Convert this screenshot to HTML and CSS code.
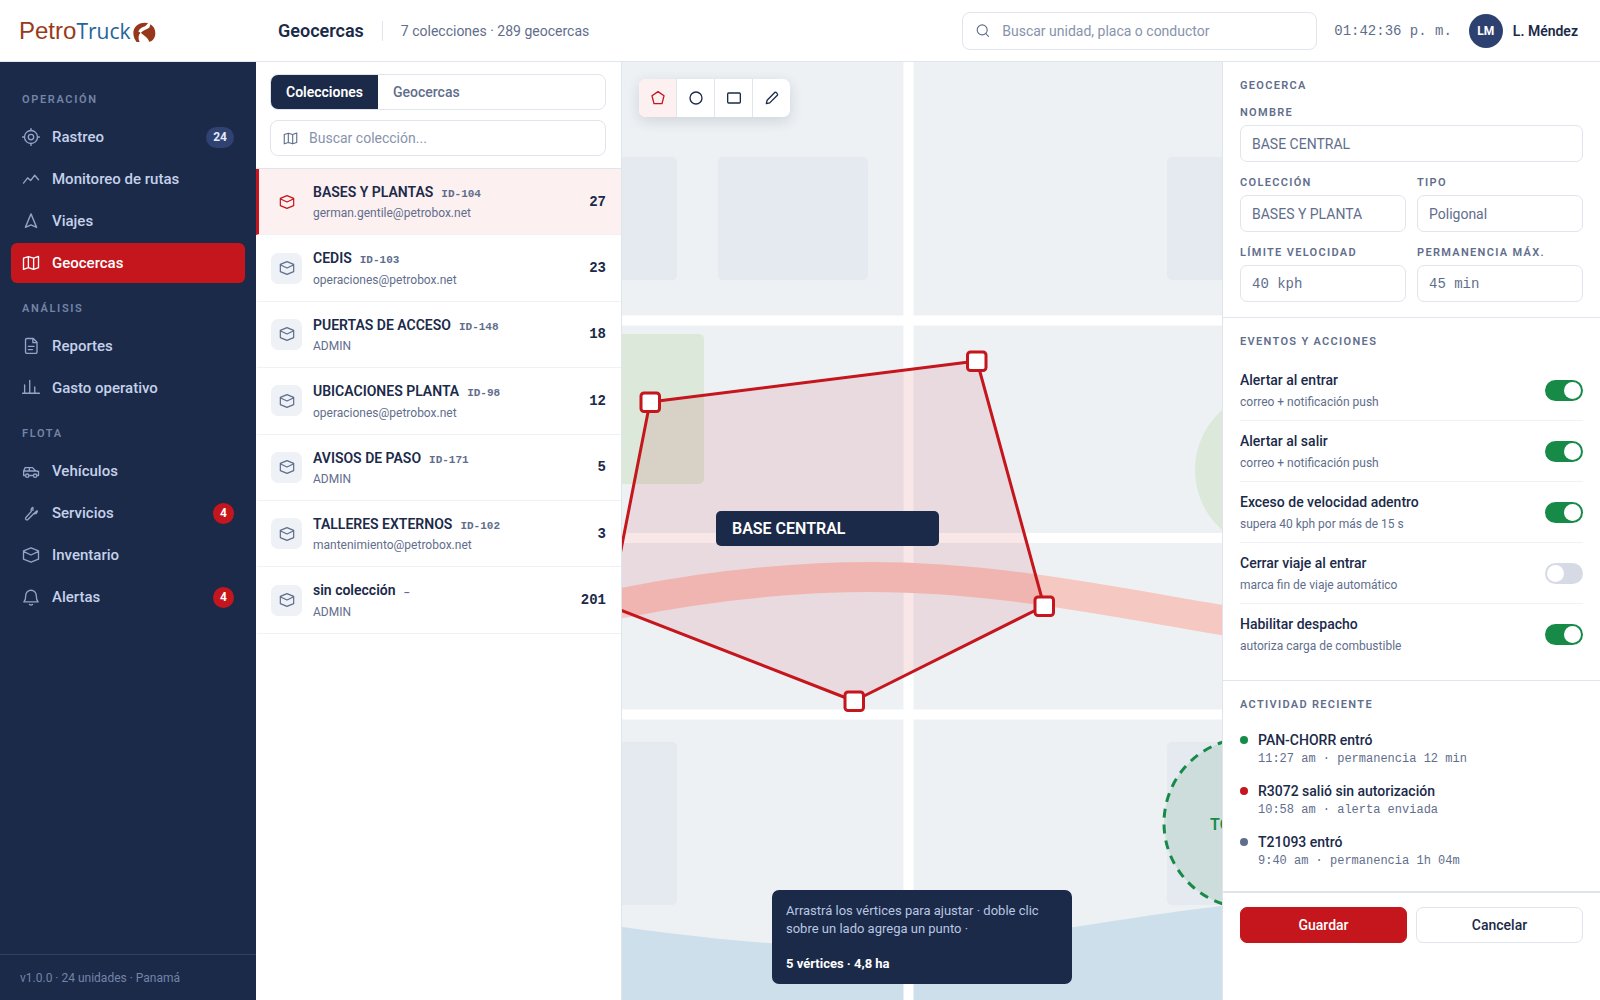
FILE: index.html
```html
<!DOCTYPE html>
<html lang="es">
<head>
<meta charset="utf-8">
<meta name="viewport" content="width=device-width, initial-scale=1">
<title>PetroTruck · Geocercas</title>
<link rel="stylesheet" href="styles.css">
</head>
<body>
<svg class="sprite" aria-hidden="true">
  <symbol id="i-target" viewBox="0 0 24 24"><circle cx="12" cy="12" r="8.7"/><circle cx="12" cy="12" r="3.6"/><path d="M12 .8v2.5M12 20.7v2.5M.8 12h2.5M20.7 12h2.5"/></symbol>
  <symbol id="i-route" viewBox="0 0 24 24"><path d="M2 17.5l5.5-7 4 3.5 5.5-7 5 6"/></symbol>
  <symbol id="i-nav" viewBox="0 0 24 24"><path d="M12 2.5L4.5 20.5l7.5-3.200 7.500 3.200z"/></symbol>
  <symbol id="i-map" viewBox="0 0 24 24"><path d="M8.500 3.500L2 5.500v15l6.500-2.200 7 2.200 6.500-2.200v-15l-6.500 2.200zM8.500 3.500v14.800M15.500 5.500v15"/></symbol>
  <symbol id="i-doc" viewBox="0 0 24 24"><path d="M6.500 2h8.500l5 5v13a1.800 1.800 0 0 1-1.800 1.800H6.500A1.800 1.800 0 0 1 4.700 20V3.800A1.800 1.800 0 0 1 6.500 2zM14.500 2v5.500H20M8.500 12.500h7.500M8.500 16.800h5.500"/></symbol>
  <symbol id="i-bars" viewBox="0 0 24 24"><path d="M.8 19h22.400M3.500 19V8M10.300 19V2M17 19v-8.500"/></symbol>
  <symbol id="i-car" viewBox="0 0 24 24"><path d="M4.500 18H2.200v-6l2-4.500h9.800l4 4.200 4 1V18h-2M9.500 18h5.500M2.200 12h16M9.800 7.500V12"/><circle cx="7" cy="18.200" r="2.200"/><circle cx="17.500" cy="18.200" r="2.200"/></symbol>
  <symbol id="i-wrench" viewBox="0 0 24 24"><path d="M14.500 4.500c-2 1-2.800 3-2 5.300L5.200 18a1.800 1.800 0 0 0 2.700 2.600l7.600-7.600c2.500.4 4.300-.6 5-3M14.500 4.500v4M15.500 13l4.500-4"/></symbol>
  <symbol id="i-box" viewBox="0 0 24 24"><path d="M12 2.500l10 4v11L12 21.500 2 17.500v-11zM2.500 7.500L12 12 21.500 7.500"/></symbol>
  <symbol id="i-bell" viewBox="0 0 24 24"><path d="M2.500 18.500c2.500-2.500 2.500-4.500 2.500-8.500a7 7 0 0 1 14 0c0 4 0 6 2.500 8.500zM10 22a3.500 3.500 0 0 0 4 0"/></symbol>
  <symbol id="i-search" viewBox="0 0 24 24"><circle cx="11.500" cy="11" r="8"/><path d="M17.300 16.800l4.200 4.700"/></symbol>
  <symbol id="i-poly" viewBox="0 0 24 24"><path d="M12 2.500l9 6.200L18 20.500H6L3 8.700z"/></symbol>
  <symbol id="i-circle" viewBox="0 0 24 24"><circle cx="12" cy="12" r="9"/></symbol>
  <symbol id="i-rect" viewBox="0 0 24 24"><rect x="2.500" y="4.500" width="19" height="15" rx="1.500"/></symbol>
  <symbol id="i-pencil" viewBox="0 0 24 24"><path d="M3.500 20.500l1.200-5.200L16.500 3.500c1-1 4.800 2.800 3.900 3.900L8.600 19.300z"/></symbol>
</svg>

<header class="topbar">
  <a class="brand" href="#" aria-label="PetroTruck">
    <span class="brand-name"><span class="brand-petro">Petro</span><span class="brand-truck">Truck</span></span>
    <svg class="brand-mark" viewBox="398 66 70 64" aria-hidden="true"><path d="M436 68C414 67 399 82 399 99c0 12 4 21 10 28h9c-5-12-4-21 3-28l-7-4c4-9 12-14 21-16l9-9z"/><path d="M451 73c10 6 15 16 15 28 0 10-5 19-13 24l-6 1c-3-12-14-17-25-27 8-8 19-11 26-16z"/></svg>
  </a>
  <div class="topbar-main">
    <h1 class="title">Geocercas</h1>
    <span class="subtitle">7 colecciones · 289 geocercas</span>
    <label class="search search-global"><svg class="icon"><use href="#i-search"/></svg><input type="search" placeholder="Buscar unidad, placa o conductor" aria-label="Buscar unidad, placa o conductor"></label>
    <time class="clock">01:42:36 p. m.</time>
    <div class="user"><span class="avatar">LM</span><span class="user-name">L. Méndez</span></div>
  </div>
</header>

<div class="app">
  <aside class="sidebar">
    <nav class="nav">
      <h2 class="nav-label">OPERACIÓN</h2>
      <a class="nav-item" href="#"><svg class="icon"><use href="#i-target"/></svg>Rastreo<span class="badge">24</span></a>
      <a class="nav-item" href="#"><svg class="icon"><use href="#i-route"/></svg>Monitoreo de rutas</a>
      <a class="nav-item" href="#"><svg class="icon"><use href="#i-nav"/></svg>Viajes</a>
      <a class="nav-item active" href="#" aria-current="page"><svg class="icon"><use href="#i-map"/></svg>Geocercas</a>
      <h2 class="nav-label">ANÁLISIS</h2>
      <a class="nav-item" href="#"><svg class="icon"><use href="#i-doc"/></svg>Reportes</a>
      <a class="nav-item" href="#"><svg class="icon"><use href="#i-bars"/></svg>Gasto operativo</a>
      <h2 class="nav-label">FLOTA</h2>
      <a class="nav-item" href="#"><svg class="icon"><use href="#i-car"/></svg>Vehículos</a>
      <a class="nav-item" href="#"><svg class="icon"><use href="#i-wrench"/></svg>Servicios<span class="badge alert">4</span></a>
      <a class="nav-item" href="#"><svg class="icon"><use href="#i-box"/></svg>Inventario</a>
      <a class="nav-item" href="#"><svg class="icon"><use href="#i-bell"/></svg>Alertas<span class="badge alert">4</span></a>
    </nav>
    <footer class="sidebar-foot">v1.0.0 · 24 unidades · Panamá</footer>
  </aside>

  <section class="collections">
    <div class="collections-head">
      <div class="tabs">
        <button class="tab active" type="button">Colecciones</button>
        <button class="tab" type="button">Geocercas</button>
      </div>
      <label class="search"><svg class="icon"><use href="#i-map"/></svg><input type="search" placeholder="Buscar colección..." aria-label="Buscar colección"></label>
    </div>
    <ul class="list">
      <li class="row selected"><span class="row-icon"><svg class="icon"><use href="#i-box"/></svg></span><div class="row-text"><div class="row-name">BASES Y PLANTAS<span class="row-id">ID-104</span></div><div class="row-sub">german.gentile@petrobox.net</div></div><span class="row-count">27</span></li>
      <li class="row"><span class="row-icon"><svg class="icon"><use href="#i-box"/></svg></span><div class="row-text"><div class="row-name">CEDIS<span class="row-id">ID-103</span></div><div class="row-sub">operaciones@petrobox.net</div></div><span class="row-count">23</span></li>
      <li class="row"><span class="row-icon"><svg class="icon"><use href="#i-box"/></svg></span><div class="row-text"><div class="row-name">PUERTAS DE ACCESO<span class="row-id">ID-148</span></div><div class="row-sub">ADMIN</div></div><span class="row-count">18</span></li>
      <li class="row"><span class="row-icon"><svg class="icon"><use href="#i-box"/></svg></span><div class="row-text"><div class="row-name">UBICACIONES PLANTA<span class="row-id">ID-98</span></div><div class="row-sub">operaciones@petrobox.net</div></div><span class="row-count">12</span></li>
      <li class="row"><span class="row-icon"><svg class="icon"><use href="#i-box"/></svg></span><div class="row-text"><div class="row-name">AVISOS DE PASO<span class="row-id">ID-171</span></div><div class="row-sub">ADMIN</div></div><span class="row-count">5</span></li>
      <li class="row"><span class="row-icon"><svg class="icon"><use href="#i-box"/></svg></span><div class="row-text"><div class="row-name">TALLERES EXTERNOS<span class="row-id">ID-102</span></div><div class="row-sub">mantenimiento@petrobox.net</div></div><span class="row-count">3</span></li>
      <li class="row"><span class="row-icon"><svg class="icon"><use href="#i-box"/></svg></span><div class="row-text"><div class="row-name">sin colección<span class="row-id">–</span></div><div class="row-sub">ADMIN</div></div><span class="row-count">201</span></li>
    </ul>
  </section>

  <main class="map">
    <svg class="map-canvas" viewBox="0 0 600 938" preserveAspectRatio="xMidYMid slice" role="img" aria-label="Mapa de geocercas">
      <g class="m-block">
        <rect x="-94" y="95" width="149" height="123" rx="5"/>
        <rect x="96" y="95" width="150" height="123" rx="5"/>
        <rect x="545" y="95" width="150" height="123" rx="5"/>
        <rect x="-94" y="680" width="149" height="163" rx="5"/>
        <rect x="545" y="680" width="150" height="163" rx="5"/>
      </g>
      <g class="m-park">
        <rect x="-60" y="272" width="142" height="150" rx="5"/>
        <circle cx="653" cy="408" r="80"/>
      </g>
      <path class="m-water" d="M0 865C110 880 180 885 250 884C390 881 470 859 600 844V938H0z"/>
      <path class="m-road" d="M0 258.500H600M0 476H600M0 652.500H600M286.500 0V938"/>
      <path class="m-river" d="M-40 549L0 541C90 523 170 515 250 515C370 515 480 538 600 558L640 565"/>
      <circle class="m-circle" cx="627" cy="761" r="85"/>
      <text class="m-circle-name" x="626" y="768" text-anchor="middle">TOCUMEN</text>
      <path class="m-poly" d="M28 340L355 299L422 544L232 639L-12 544z"/>
      <g class="m-vertex">
        <rect x="19" y="331" width="18.500" height="18.500" rx="3"/>
        <rect x="345.500" y="290" width="18.500" height="18.500" rx="3"/>
        <rect x="413" y="535" width="18.500" height="18.500" rx="3"/>
        <rect x="223" y="630" width="18.500" height="18.500" rx="3"/>
      </g>
      <rect class="m-tag" x="94" y="449" width="223" height="35" rx="5"/>
      <text class="m-tag-name" x="110" y="472">BASE CENTRAL</text>
    </svg>
    <div class="tools" role="toolbar" aria-label="Herramientas de dibujo">
      <button class="tool active" type="button" aria-label="Polígono"><svg class="icon"><use href="#i-poly"/></svg></button>
      <button class="tool" type="button" aria-label="Círculo"><svg class="icon"><use href="#i-circle"/></svg></button>
      <button class="tool" type="button" aria-label="Rectángulo"><svg class="icon"><use href="#i-rect"/></svg></button>
      <button class="tool" type="button" aria-label="Editar"><svg class="icon"><use href="#i-pencil"/></svg></button>
    </div>
    <div class="hint">
      <p>Arrastrá los vértices para ajustar · doble clic sobre un lado agrega un punto ·</p>
      <strong>5 vértices · 4,8 ha</strong>
    </div>
  </main>

  <aside class="detail">
    <section class="block">
      <h2 class="label">GEOCERCA</h2>
      <div class="fields">
        <div class="field wide"><label class="label" for="f-name">NOMBRE</label><input id="f-name" value="BASE CENTRAL"></div>
        <div class="field"><label class="label" for="f-col">COLECCIÓN</label><input id="f-col" value="BASES Y PLANTA"></div>
        <div class="field"><label class="label" for="f-type">TIPO</label><input id="f-type" value="Poligonal"></div>
        <div class="field"><label class="label" for="f-speed">LÍMITE VELOCIDAD</label><input class="mono" id="f-speed" value="40 kph"></div>
        <div class="field"><label class="label" for="f-stay">PERMANENCIA MÁX.</label><input class="mono" id="f-stay" value="45 min"></div>
      </div>
    </section>
    <section class="block">
      <h2 class="label">EVENTOS Y ACCIONES</h2>
      <div class="events">
        <label class="event"><span class="event-text"><span class="event-name">Alertar al entrar</span><span class="event-sub">correo + notificación push</span></span><input class="switch" type="checkbox" checked></label>
        <label class="event"><span class="event-text"><span class="event-name">Alertar al salir</span><span class="event-sub">correo + notificación push</span></span><input class="switch" type="checkbox" checked></label>
        <label class="event"><span class="event-text"><span class="event-name">Exceso de velocidad adentro</span><span class="event-sub">supera 40 kph por más de 15 s</span></span><input class="switch" type="checkbox" checked></label>
        <label class="event"><span class="event-text"><span class="event-name">Cerrar viaje al entrar</span><span class="event-sub">marca fin de viaje automático</span></span><input class="switch" type="checkbox"></label>
        <label class="event"><span class="event-text"><span class="event-name">Habilitar despacho</span><span class="event-sub">autoriza carga de combustible</span></span><input class="switch" type="checkbox" checked></label>
      </div>
    </section>
    <section class="block">
      <h2 class="label">ACTIVIDAD RECIENTE</h2>
      <ul class="activity">
        <li class="act ok"><div class="act-name">PAN-CHORR entró</div><div class="act-sub">11:27 am · permanencia 12 min</div></li>
        <li class="act bad"><div class="act-name">R3072 salió sin autorización</div><div class="act-sub">10:58 am · alerta enviada</div></li>
        <li class="act"><div class="act-name">T21093 entró</div><div class="act-sub">9:40 am · permanencia 1h 04m</div></li>
      </ul>
    </section>
    <div class="actions">
      <button class="btn primary" type="button">Guardar</button>
      <button class="btn" type="button">Cancelar</button>
    </div>
  </aside>
</div>
</body>
</html>
```
FILE: styles.css
```css
:root {
  --navy: #1b2a49;
  --red: #c4161c;
  --green: #178a48;
  --muted: #5f6e8c;
  --line: #e0e4ec;
  --mono: "Liberation Mono", monospace;
}

* { box-sizing: border-box; }

body {
  margin: 0;
  min-height: 100vh;
  display: flex;
  flex-direction: column;
  font: 14px/20px Roboto, "Liberation Sans", sans-serif;
  color: var(--navy);
  background: #fff;
}

h1, h2, p, ul { margin: 0; padding: 0; }
ul { list-style: none; }
a { color: inherit; text-decoration: none; }
button, input { font: inherit; color: inherit; }

.sprite { display: none; }

.icon {
  width: 18px;
  height: 18px;
  flex: none;
  fill: none;
  stroke: currentColor;
  stroke-width: 1.8;
  stroke-linecap: round;
  stroke-linejoin: round;
}

/* Top bar */
.topbar {
  display: flex;
  height: 62px;
  border-bottom: 1px solid var(--line);
}

.brand {
  width: 256px;
  flex: none;
  display: flex;
  align-items: center;
  padding: 4px 19px 0;
  line-height: 28px;
}
.brand-petro { font-family: "Liberation Sans", sans-serif; font-size: 24px; color: #9a3a1c; }
.brand-truck { font-family: "Open Sans", sans-serif; font-size: 21px; color: #23659a; }
.brand-mark { width: 23px; height: 21px; margin-left: 2px; fill: #96371b; }

.topbar-main {
  flex: 1;
  display: flex;
  align-items: center;
  padding: 0 22px;
}
.title { font-size: 18px; font-weight: 600; }
.subtitle {
  margin-left: 18px;
  padding-left: 18px;
  border-left: 1px solid var(--line);
  color: var(--muted);
}

.search {
  display: flex;
  align-items: center;
  gap: 11px;
  height: 36px;
  padding: 0 12px;
  border: 1px solid var(--line);
  border-radius: 8px;
  color: var(--muted);
}
.search .icon { width: 15px; height: 15px; }
.search input {
  flex: 1;
  min-width: 0;
  padding: 0;
  border: 0;
  outline: 0;
  background: none;
}
.search input::placeholder { color: #8793ab; opacity: 1; }
.search-global { width: 355px; height: 38px; margin-left: auto; gap: 12px; }

.clock { margin: 0 17px; font: 14px/20px var(--mono); color: var(--muted); }
.user { display: flex; align-items: center; gap: 10px; font-weight: 600; }
.avatar {
  width: 34px;
  height: 34px;
  border-radius: 50%;
  background: #2c4170;
  color: #fff;
  font-size: 12px;
  font-weight: 700;
  line-height: 34px;
  text-align: center;
}

/* Columns */
.app {
  flex: 1;
  display: grid;
  grid-template-columns: 256px 366px minmax(0, 1fr) 378px;
}

/* Sidebar */
.sidebar {
  display: flex;
  flex-direction: column;
  background: var(--navy);
  color: #c5d1ea;
}
.nav {
  flex: 1;
  display: flex;
  flex-direction: column;
  gap: 2px;
  padding: 14px 11px;
}
.nav-label {
  padding: 16px 11px 7px;
  font-size: 11px;
  line-height: 16px;
  font-weight: 600;
  letter-spacing: .15em;
  color: #7384a8;
}
.nav-item {
  display: flex;
  align-items: center;
  gap: 12px;
  height: 40px;
  padding: 0 11px;
  border-radius: 6px;
  font-size: 15px;
  font-weight: 500;
}
.nav-item .icon { color: #93a4c8; }
.nav-item.active, .nav-item.active .icon { background: var(--red); color: #fff; }
.badge {
  min-width: 21px;
  height: 21px;
  margin-left: auto;
  padding: 0 7px;
  border-radius: 11px;
  background: #2f4272;
  color: #e3eaf8;
  font-size: 12px;
  font-weight: 700;
  line-height: 21px;
  text-align: center;
}
.badge.alert { background: var(--red); color: #fff; }
.sidebar-foot {
  padding: 13px 20px 12px;
  border-top: 1px solid #33415f;
  font-size: 12px;
  color: #7384a8;
}

/* Collections */
.collections { border-right: 1px solid var(--line); }
.collections-head {
  display: flex;
  flex-direction: column;
  gap: 10px;
  padding: 12px 15px 12px 14px;
  border-bottom: 1px solid var(--line);
}
.tabs {
  display: flex;
  height: 36px;
  border: 1px solid var(--line);
  border-radius: 8px;
  overflow: hidden;
}
.tab {
  padding: 0 15px;
  border: 0;
  background: none;
  color: var(--muted);
  font-weight: 500;
}
.tab.active { background: var(--navy); color: #fff; font-weight: 600; }

.row {
  display: flex;
  align-items: center;
  gap: 11px;
  padding: 12px 15px 12px 12px;
  border-left: 3px solid transparent;
  border-bottom: 1px solid #eef1f5;
}
.row.selected { border-left-color: var(--red); background: #fdf0f0; }
.row-icon {
  width: 31px;
  height: 31px;
  display: grid;
  place-items: center;
  border-radius: 7px;
  background: #eef1f5;
  color: var(--muted);
}
.row-icon .icon { width: 16px; height: 16px; }
.selected .row-icon { background: none; color: var(--red); }
.row-text { flex: 1; }
.row-name { font-weight: 600; line-height: 1.6; }
.row-id { margin-left: 8px; font: 600 11px var(--mono); color: var(--muted); }
.row-sub { margin-top: 1px; font-size: 12px; line-height: 18px; color: var(--muted); }
.row-count { font: 700 14px var(--mono); }

/* Map */
.map { position: relative; background: #edf1f4; overflow: hidden; }
.map-canvas { position: absolute; inset: 0; width: 100%; height: 100%; }
.m-block { fill: #e5e9f0; }
.m-park { fill: #dbe8da; }
.m-water { fill: #cddfea; }
.m-road { fill: none; stroke: #fff; stroke-width: 10; }
.m-river { fill: none; stroke: #f6c8c2; stroke-width: 30; }
.m-circle { fill: rgba(23, 138, 72, .12); stroke: var(--green); stroke-width: 3; stroke-dasharray: 9 7; }
.m-circle-name { font-size: 16px; font-weight: 600; fill: var(--green); }
.m-poly { fill: rgba(196, 22, 28, .1); stroke: #c4161c; stroke-width: 3; stroke-linejoin: round; }
.m-vertex { fill: #fff; stroke: var(--red); stroke-width: 3; }
.m-tag { fill: var(--navy); }
.m-tag-name { font-size: 16px; font-weight: 600; fill: #fff; }

.tools {
  position: absolute;
  top: 17px;
  left: 17px;
  display: flex;
  border-radius: 7px;
  background: #fff;
  box-shadow: 0 4px 14px rgba(27, 42, 73, .14);
  overflow: hidden;
}
.tool {
  display: grid;
  place-items: center;
  width: 38px;
  height: 38px;
  padding: 0;
  border: 0;
  border-right: 1px solid var(--line);
  background: none;
}
.tool:last-child { width: 37px; border-right: 0; }
.tool .icon { width: 16px; height: 16px; stroke-width: 2; }
.tool.active { background: #fdf0f0; color: var(--red); }

.hint {
  position: absolute;
  right: 0;
  bottom: 16px;
  left: 0;
  width: 300px;
  margin: 0 auto;
  padding: 12px 14px 11px;
  border-radius: 7px;
  background: var(--navy);
  color: #b9c6e2;
  font-size: 13px;
  line-height: 18px;
}
.hint strong { display: block; margin-top: 17px; color: #fff; }

/* Detail panel */
.detail { border-left: 1px solid var(--line); background: #fff; }
.block { padding: 16px 17px 15px; border-bottom: 1px solid var(--line); }
.label {
  display: block;
  font-size: 11px;
  line-height: 16px;
  font-weight: 600;
  letter-spacing: .12em;
  color: var(--muted);
}
.fields {
  display: grid;
  grid-template-columns: 1fr 1fr;
  gap: 13px 11px;
  margin-top: 11px;
}
.field { display: flex; flex-direction: column; gap: 4px; min-width: 0; }
.field.wide { grid-column: span 2; }
.field input {
  width: 100%;
  height: 37px;
  padding: 0 11px;
  border: 1px solid var(--line);
  border-radius: 7px;
  background: #fff;
  color: var(--muted);
}
.field .mono { font-family: var(--mono); }

.events { margin-top: 10px; }
.event {
  display: flex;
  align-items: center;
  justify-content: space-between;
  padding: 10px 0 9px;
  border-bottom: 1px solid #eef1f5;
}
.event:last-child { border-bottom-color: transparent; }
.event-name { display: block; font-weight: 500; line-height: 21px; }
.event-sub { display: block; margin-top: 2px; font-size: 12px; line-height: 18px; color: var(--muted); }
.switch {
  appearance: none;
  width: 38px;
  height: 21px;
  margin: 0;
  padding: 2px;
  border-radius: 11px;
  background: #d5dae5;
}
.switch::before {
  content: "";
  display: block;
  width: 17px;
  height: 17px;
  border-radius: 50%;
  background: #fff;
}
.switch:checked { background: var(--green); }
.switch:checked::before { margin-left: auto; }

.activity { margin-top: 10px; }
.act {
  display: grid;
  grid-template-columns: 8px 1fr;
  column-gap: 10px;
  align-items: center;
  padding: 7px 0 5px;
}
.act::before {
  content: "";
  width: 8px;
  height: 8px;
  border-radius: 50%;
  background: var(--muted);
}
.act.ok::before { background: var(--green); }
.act.bad::before { background: var(--red); }
.act-name { font-weight: 500; line-height: 20px; }
.act-sub { grid-column: 2; font: 12px/19px var(--mono); color: var(--muted); }

.actions {
  display: grid;
  grid-template-columns: 1fr 1fr;
  gap: 9px;
  padding: 14px 17px;
  border-top: 1px solid var(--line);
}
.btn {
  height: 36px;
  border: 1px solid var(--line);
  border-radius: 7px;
  background: #fff;
  font-weight: 500;
}
.btn.primary { border-color: var(--red); background: var(--red); color: #fff; }
```
